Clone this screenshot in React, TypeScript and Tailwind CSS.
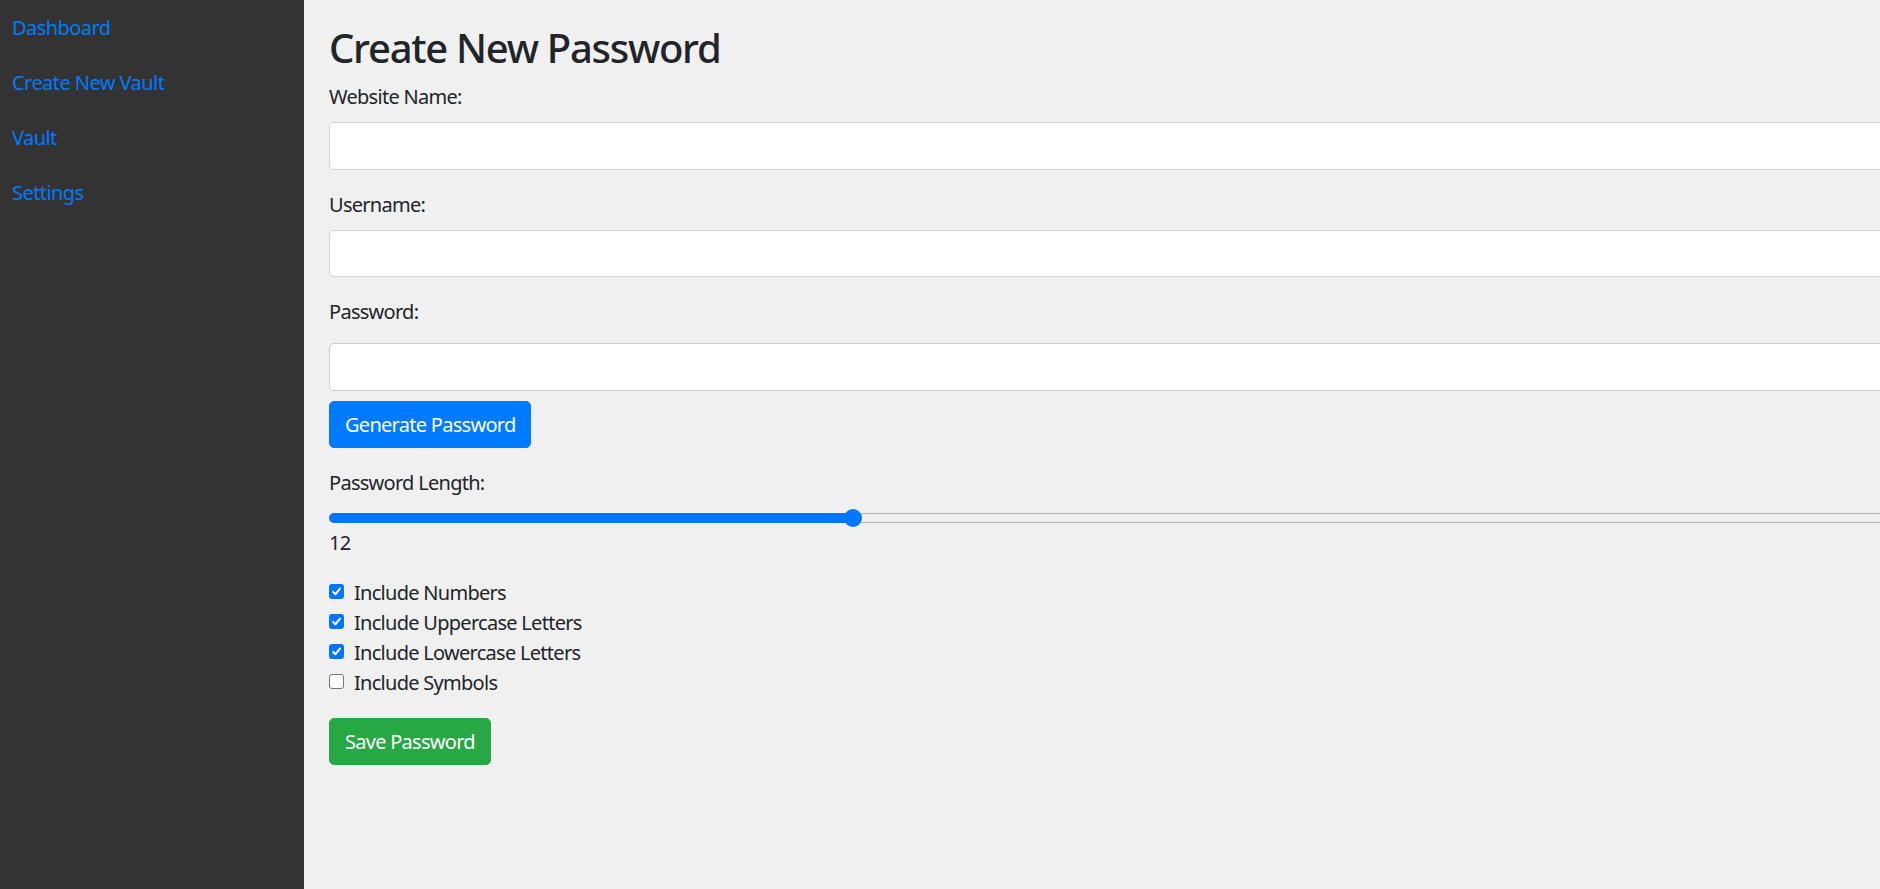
import React from "react";

const font = { fontFamily: '"Noto Sans", "Open Sans", sans-serif' };

function Check({ checked, label }: { checked: boolean; label: string }) {
  return (
    <div className="flex items-center h-[30px]">
      {checked ? (
        <div className="w-[15px] h-[15px] rounded-[3px] bg-[#0075ff] flex items-center justify-center -mt-[3px]">
          <svg width="11" height="11" viewBox="0 0 12 12">
            <path d="M2.2 6.4 L4.8 9 L9.8 2.8" stroke="#fff" strokeWidth="2.2" fill="none" strokeLinecap="round" strokeLinejoin="round" />
          </svg>
        </div>
      ) : (
        <div className="w-[15px] h-[15px] rounded-[3px] bg-white border border-[#767676] -mt-[3px]" />
      )}
      <span className="ml-[10px] text-[20px] text-[#212529] leading-[30px]">{label}</span>
    </div>
  );
}

export default function App() {
  return (
    <div className="flex w-[1880px] h-[889px] overflow-hidden bg-[#f0f0f0] tracking-[-0.045em]" style={font}>
      <aside className="w-[304px] shrink-0 bg-[#333333] pt-[13px] pl-[12px] flex flex-col gap-[25px] tracking-[-0.035em]">
        {["Dashboard", "Create New Vault", "Vault", "Settings"].map((t) => (
          <a key={t} className="text-[#007bff] text-[20px] leading-[30px] block">
            {t}
          </a>
        ))}
      </aside>
      <main className="flex-1 min-w-0 pt-[24px] pl-[25px] text-[#212529]">
        <h2 className="text-[40px] leading-[48px] font-medium mb-[10px] tracking-[-0.032em]">Create New Password</h2>

        <div className="text-[20px] leading-[30px] mb-[10px]">Website Name:</div>
        <div className="w-[1700px] h-[48px] bg-white border border-[#ced4da] rounded-[5px] mb-[20px]" />

        <div className="text-[20px] leading-[30px] mb-[10px]">Username:</div>
        <div className="w-[1700px] h-[47px] bg-white border border-[#ced4da] rounded-[5px] mb-[20px]" />

        <div className="text-[20px] leading-[30px] mb-[16px]">Password:</div>
        <div className="w-[1700px] h-[48px] bg-white border border-[#cccccc] rounded-[5px] mb-[10px]" />

        <button className="h-[47px] px-[15px] bg-[#007bff] border border-[#007bff] text-white text-[20px] leading-[30px] rounded-[5px] mb-[20px]">
          Generate Password
        </button>

        <div className="text-[20px] leading-[30px] mb-[10px]">Password Length:</div>
        <div className="relative w-[1700px] h-[20px] flex items-center">
          <div className="w-[524px] h-[10px] bg-[#0075ff] rounded-l-full" />
          <div className="flex-1 h-[10px] bg-[#efefef] border border-[#b2b2b2]" />
          <div className="absolute left-[515px] top-[1px] w-[18px] h-[18px] rounded-full bg-[#0075ff]" />
        </div>
        <div className="text-[20px] leading-[30px]">12</div>

        <div className="mt-[20px] flex flex-col">
          <Check checked label="Include Numbers" />
          <Check checked label="Include Uppercase Letters" />
          <Check checked label="Include Lowercase Letters" />
          <Check checked={false} label="Include Symbols" />
        </div>

        <button className="mt-[20px] h-[47px] px-[15px] bg-[#28a745] border border-[#28a745] text-white text-[20px] leading-[30px] rounded-[5px]">
          Save Password
        </button>
      </main>
    </div>
  );
}
